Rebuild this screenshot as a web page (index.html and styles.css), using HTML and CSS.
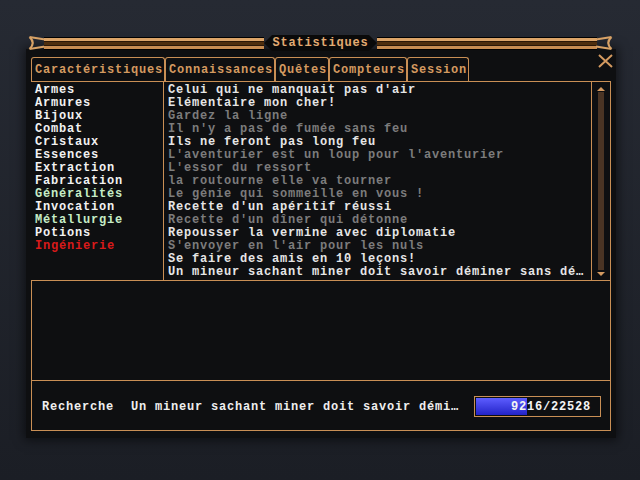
FILE: index.html
```html
<!DOCTYPE html>
<html>
<head>
<meta charset="utf-8">
<link rel="stylesheet" href="styles.css">
</head>
<body>
<div class="stage">
  <div class="titlebar">
    <svg class="end" width="18" height="16" viewBox="0 0 18 16"><path d="M1.5 2 Q8 8 1.5 14 M1.5 2 L17 4.5 M1.5 14 L17 11.5" fill="none" stroke="#d8a266" stroke-width="2.2"/></svg>
    <div class="bar"></div>
    <div class="label">Statistiques</div>
    <div class="bar"></div>
    <svg class="end" width="18" height="16" viewBox="0 0 18 16"><path d="M16.5 2 Q10 8 16.5 14 M16.5 2 L1 4.5 M16.5 14 L1 11.5" fill="none" stroke="#d8a266" stroke-width="2.2"/></svg>
  </div>
  <div class="panel">
    <svg class="close" width="15" height="14" viewBox="0 0 15 14"><path d="M1 1 L14 13 M14 1 L1 13" stroke="#d49a60" stroke-width="2" fill="none"/></svg>
    <div class="tabs">
      <div class="tab">Caractéristiques</div>
      <div class="tab">Connaissances</div>
      <div class="tab">Quêtes</div>
      <div class="tab">Compteurs</div>
      <div class="tab">Session</div>
    </div>
    <div class="upper">
      <div class="cats">
        <div>Armes</div>
        <div>Armures</div>
        <div>Bijoux</div>
        <div>Combat</div>
        <div>Cristaux</div>
        <div>Essences</div>
        <div>Extraction</div>
        <div>Fabrication</div>
        <div class="green">Généralités</div>
        <div>Invocation</div>
        <div class="green">Métallurgie</div>
        <div>Potions</div>
        <div class="red">Ingénierie</div>
      </div>
      <div class="quests">
        <div class="on">Celui qui ne manquait pas d'air</div>
        <div class="on">Elémentaire mon cher!</div>
        <div class="off">Gardez la ligne</div>
        <div class="off">Il n'y a pas de fumée sans feu</div>
        <div class="on">Ils ne feront pas long feu</div>
        <div class="off">L'aventurier est un loup pour l'aventurier</div>
        <div class="off">L'essor du ressort</div>
        <div class="off">la routourne elle va tourner</div>
        <div class="off">Le génie qui sommeille en vous !</div>
        <div class="on">Recette d'un apéritif réussi</div>
        <div class="off">Recette d'un dîner qui détonne</div>
        <div class="on">Repousser la vermine avec diplomatie</div>
        <div class="off">S'envoyer en l'air pour les nuls</div>
        <div class="on">Se faire des amis en 10 leçons!</div>
        <div class="on">Un mineur sachant miner doit savoir déminer sans dé…</div>
      </div>
      <div class="scroll">
        <div class="arrow up"></div>
        <div class="track"></div>
        <div class="arrow down"></div>
      </div>
    </div>
    <div class="lower">
      <div class="blank"></div>
      <div class="search">
        <span class="slabel">Recherche</span>
        <span class="svalue">Un mineur sachant miner doit savoir démi…</span>
        <div class="progress">
          <div class="fill" style="width:41%"></div>
          <span class="ptext">9216/22528</span>
        </div>
      </div>
    </div>
  </div>
</div>
</body>
</html>
```

FILE: styles.css
```css
html, body {
  margin: 0;
  padding: 0;
}
body {
  width: 640px;
  height: 480px;
  background: linear-gradient(#262a33, #1b1e25);
  font-family: "Liberation Mono", "DejaVu Sans Mono", monospace;
  font-weight: bold;
  font-size: 12px;
  letter-spacing: 0.8px;
  overflow: hidden;
}
.stage {
  padding: 35px 0 0 26px;
  width: 590px;
}
.titlebar {
  display: flex;
  align-items: center;
  height: 16px;
  margin: 0 3px -2px 2px;
  position: relative;
  z-index: 2;
}
.end {
  flex: none;
  display: block;
}
.bar {
  flex: 1;
  height: 13px;
  background: linear-gradient(#000 0 1px, #dba468 1px 4px, #2a1707 4px 5px, #4e2e0e 5px 8px, #2a1707 8px 9px, #c88d52 9px 12px, #000 12px);
}
.end:first-child { margin-right: -2px; }
.end:last-child { margin-left: -2px; }
.label {
  flex: none;
  width: 113px;
  height: 16px;
  line-height: 16px;
  text-align: center;
  color: #e2ab72;
  background: #0a0a0a;
  clip-path: polygon(8px 0, calc(100% - 8px) 0, 100% 50%, calc(100% - 8px) 100%, 8px 100%, 0 50%);
}
.panel {
  position: relative;
  background: #0e0f11;
  height: 381px;
  padding: 8px 5px 0 5px;
  box-shadow: 0 0 10px 2px rgba(0, 0, 0, 0.55);
}
.close {
  position: absolute;
  right: 3px;
  top: 5px;
}
.tabs {
  display: flex;
  height: 24px;
}
.tab {
  box-sizing: border-box;
  height: 24px;
  line-height: 24px;
  border: 1px solid #c98f55;
  border-bottom: none;
  border-radius: 3px 3px 0 0;
  padding: 0 1px 0 3px;
  color: #d49a60;
}
.upper {
  display: flex;
  height: 198px;
  border-top: 1px solid #c98f55;
  border-right: 1px solid #c98f55;
  border-bottom: 1px solid #c98f55;
}
.cats {
  width: 128px;
  padding: 2px 0 0 4px;
  color: #f2f2f2;
  line-height: 13px;
}
.cats .green { color: #c6ecc6; }
.cats .red { color: #d81a1a; }
.quests {
  flex: 1;
  border-left: 1px solid #c98f55;
  padding: 2px 0 0 4px;
  line-height: 13px;
  white-space: nowrap;
  overflow: hidden;
}
.quests .on { color: #e6e6e6; }
.quests .off { color: #7c7c7c; }
.scroll {
  width: 19px;
  border-left: 1px solid #c98f55;
  display: flex;
  flex-direction: column;
  align-items: center;
  padding: 5px 0 4px;
  box-sizing: border-box;
}
.arrow {
  width: 0;
  height: 0;
  border-left: 4px solid transparent;
  border-right: 4px solid transparent;
}
.arrow.up { border-bottom: 4px solid #d49a60; }
.arrow.down { border-top: 4px solid #d49a60; }
.track {
  flex: 1;
  width: 6px;
  background: #4a3424;
  margin: 1px 0 2px;
}
.lower {
  height: 149px;
  border-left: 1px solid #c98f55;
  border-right: 1px solid #c98f55;
  border-bottom: 1px solid #c98f55;
  display: flex;
  flex-direction: column;
}
.blank {
  height: 99px;
  border-bottom: 1px solid #c98f55;
}
.search {
  flex: 1;
  display: flex;
  align-items: center;
  padding: 2px 9px 0 10px;
  color: #eeeeee;
}
.slabel {
  width: 89px;
}
.svalue {
  flex: 1;
  white-space: nowrap;
}
.progress {
  position: relative;
  box-sizing: border-box;
  width: 127px;
  height: 21px;
  border: 1px solid #c98f55;
  padding: 1px;
  display: flex;
  align-items: center;
  justify-content: flex-end;
}
.fill {
  position: absolute;
  left: 1px;
  top: 1px;
  bottom: 1px;
  background: linear-gradient(#5d5dff, #2323c8);
}
.ptext {
  position: relative;
  padding-right: 8px;
  color: #f4f4f4;
}
```
